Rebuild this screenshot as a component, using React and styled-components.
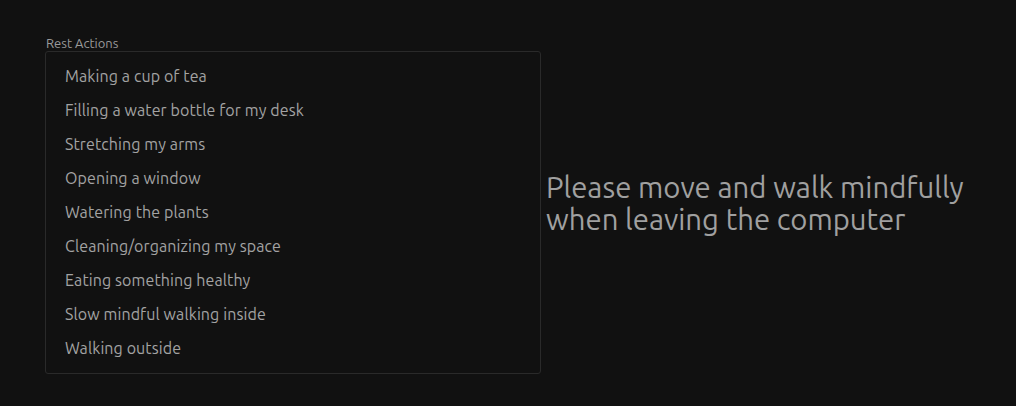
import { styled, createGlobalStyle } from "styled-components";

const GlobalStyle = createGlobalStyle`
  html, body {
    margin: 0;
    background: #111111;
    font-family: "Ubuntu", "Noto Sans", "DejaVu Sans", sans-serif;
  }
`;

const Page = styled.div`
  display: flex;
  align-items: center;
  gap: 5px;
  padding: 35px 0 0 45px;
`;

const Column = styled.div`
  display: flex;
  flex-direction: column;
  width: 496px;
`;

const Label = styled.div`
  font-size: 13px;
  line-height: 16px;
  color: #9a9a9a;
  padding-left: 1px;
`;

const List = styled.ul`
  list-style: none;
  margin: 0;
  padding: 7px 0 8px 0;
  border: 1px solid #2a2a2a;
  border-radius: 3px;
`;

const Item = styled.li`
  height: 34px;
  display: flex;
  align-items: center;
  padding-left: 19px;
  font-size: 16px;
  letter-spacing: 0.1px;
  color: #a3a3a3;
`;

const Message = styled.p`
  margin: 0 0 2px 0;
  font-size: 29.3px;
  line-height: 32px;
  color: #a0a0a0;
`;

const actions = [
  "Making a cup of tea",
  "Filling a water bottle for my desk",
  "Stretching my arms",
  "Opening a window",
  "Watering the plants",
  "Cleaning/organizing my space",
  "Eating something healthy",
  "Slow mindful walking inside",
  "Walking outside",
];

export default function App() {
  return (
    <>
      <GlobalStyle />
      <Page>
        <Column>
          <Label>Rest Actions</Label>
          <List>
            {actions.map((a) => (
              <Item key={a}>{a}</Item>
            ))}
          </List>
        </Column>
        <Message>
          Please move and walk mindfully
          <br />
          when leaving the computer
        </Message>
      </Page>
    </>
  );
}
